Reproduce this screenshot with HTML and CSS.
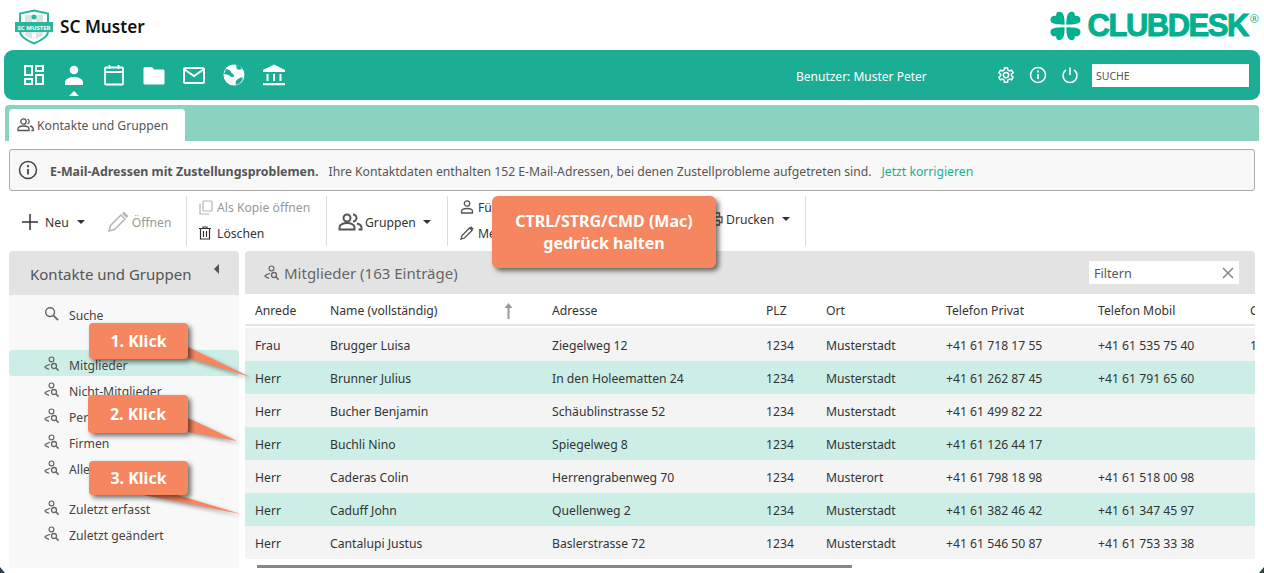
FILE: index.html
```html
<!doctype html>
<html lang="de">
  <head>
    <meta charset="UTF-8" />
    <title>SC Muster</title>
    <link rel="stylesheet" href="styles.css">
  </head>
  <body>
    <svg class="defs" width="0" height="0">
      <symbol id="i-find" viewBox="0 0 16 16">
        <circle cx="7.5" cy="3.4" r="2.4" fill="none" stroke="currentColor" stroke-width="1.2"/>
        <path d="M6 8.300 1.200 10.400v1.200L5 13.400" fill="none" stroke="currentColor" stroke-width="1.2"/>
        <circle cx="10" cy="10" r="2.500" fill="none" stroke="currentColor" stroke-width="1.3"/>
        <path d="m12 12 2.600 2.600" stroke="currentColor" stroke-width="1.5"/>
      </symbol>
      <symbol id="i-leaf" viewBox="0 0 17 15">
        <path d="M16 14.500C16 9 16 .5 10 .5 7.500.5 6.500 2.500 6.800 4.800 3.500 4.300.5 5.500.5 9.500.5 14 8 14.500 16 14.500z"/>
      </symbol>
    </svg>

    <div class="page">
      <header class="top">
        <div class="brand">
          <svg class="crest" width="40" height="36" viewBox="0 0 40 36">
            <path d="M20 1.500 34 4.500V23c0 5-7 8.500-14 11.500C13 31.500 6 28 6 23V4.500z" fill="#fff" stroke="#2bb69c" stroke-width="2"/>
            <path d="M11 6h7v24l-7-4zM22 6h7v20l-7 4z" fill="#d5e6e2"/>
            <path d="M20 5.500a1.500 1.500 0 0 1 0 5 1.500 1.500 0 0 1 0-5zM17.500 8a1.500 1.500 0 0 1 5 0 1.500 1.500 0 0 1-5 0z" fill="#2bb69c"/>
            <rect x="1" y="13" width="38" height="10" fill="#2bb69c"/>
            <text x="20" y="20.500" text-anchor="middle" class="crest-text">SC MUSTER</text>
          </svg>
          <span class="club-name">SC Muster</span>
        </div>
        <div class="cd-logo">
          <svg class="clover" width="31" height="30" viewBox="0 0 31 30" fill="#00b18f">
            <use href="#i-leaf" width="15.500" height="14.500"/>
            <use href="#i-leaf" width="15.500" height="14.500" transform="matrix(-1 0 0 1 31 0)"/>
            <use href="#i-leaf" width="15.500" height="14.500" transform="matrix(1 0 0 -1 0 30)"/>
            <use href="#i-leaf" width="15.500" height="14.500" transform="matrix(-1 0 0 -1 31 30)"/>
          </svg>
          <span class="cd-word">CLUBDESK</span><sup class="cd-reg">®</sup>
        </div>
      </header>

      <nav class="mainbar">
        <div class="mainbar-icons">
          <svg width="22" height="22" viewBox="0 0 22 22" fill="none" stroke="#fff" stroke-width="2"><rect x="2" y="2" width="7" height="9"/><rect x="13" y="2" width="7" height="5"/><rect x="2" y="15" width="7" height="5"/><rect x="13" y="11" width="7" height="9"/></svg>
          <span class="nav-active">
            <svg width="22" height="22" viewBox="0 0 22 22" fill="#fff"><circle cx="11" cy="6" r="4.300"/><path d="M2 21v-3c0-3 5-5 9-5s9 2 9 5v3z"/></svg>
          </span>
          <svg width="22" height="22" viewBox="0 0 22 22" fill="none" stroke="#fff" stroke-width="1.800"><rect x="2" y="3.500" width="18" height="17" rx="1"/><path d="M2 8h18M6.500 1v4M15.500 1v4"/></svg>
          <svg width="22" height="22" viewBox="0 0 22 22" fill="#fff"><path d="M2 3h7l2 2.500h9c1 0 1.500.5 1.500 1.500v12c0 1-.5 1.500-1.500 1.500H2C1 20.500.5 20 .5 19V4.500C.5 3.500 1 3 2 3z"/></svg>
          <svg width="22" height="22" viewBox="0 0 22 22" fill="none" stroke="#fff" stroke-width="2"><rect x="1" y="4" width="20" height="15" rx="1.500"/><path d="m1.500 5.500 9.500 6.500 9.500-6.500"/></svg>
          <svg width="22" height="22" viewBox="0 0 22 22"><circle cx="11" cy="11" r="10.500" fill="#fff"/><path d="M3 5c2 0 4 1 5 3s3 2 3 4-3 1-4 0-4-2-6-2zM13 21c-1-3 0-5 2-6s3-2 5-1c-1 3-3 6-7 7zM13 1c1 2 0 3 1 4s3 1 5 0c-1-2-3-4-6-4z" fill="#1bae94"/></svg>
          <svg width="22" height="22" viewBox="0 0 22 22" fill="#fff"><path d="M11 .5 22 6v2H0V6zM0 19h22v2.200H0z"/><path d="M3.500 10h2v7h-2zM10 10h2v7h-2zM16.500 10h2v7h-2z"/></svg>
        </div>
        <span class="user">Benutzer: Muster Peter</span>
        <div class="mainbar-tools">
          <svg width="18" height="18" viewBox="0 0 24 24" fill="none" stroke="#fff" stroke-width="2"><circle cx="12" cy="12" r="3.500"/><path d="m10 2.500-.6 3-2 1.100-2.900-1L2.500 9l2.300 2v2l-2.300 2 2 3.400 2.900-1 2 1.100.6 3h4l.6-3 2-1.100 2.900 1 2-3.400-2.300-2v-2l2.300-2-2-3.400-2.900 1-2-1.100-.6-3z"/></svg>
          <svg width="18" height="18" viewBox="0 0 18 18" fill="none" stroke="#fff" stroke-width="1.500"><circle cx="9" cy="9" r="7.500"/><path d="M9 8v5M9 4.500v2" stroke-width="1.800"/></svg>
          <svg width="18" height="18" viewBox="0 0 18 18" fill="none" stroke="#fff" stroke-width="1.500"><path d="M9 1.500v7.500M5 3.800a7 7 0 1 0 8 0"/></svg>
        </div>
        <div class="search">SUCHE</div>
      </nav>

      <div class="tabstrip">
        <div class="tab">
          <svg width="17" height="14" viewBox="0 0 17 14" fill="none" stroke="#555" stroke-width="1.300"><circle cx="6.500" cy="3.500" r="2.700"/><path d="M1 12.500v-1.500c0-2 3-3 5.500-3s5.500 1 5.500 3v1.500z"/><path d="M10.500 1a2.700 2.700 0 0 1 0 5M13 8c2 .5 3.300 1.500 3.300 3v1.500h-2"/></svg>
          Kontakte und Gruppen
        </div>
      </div>

      <div class="notice">
        <svg width="20" height="20" viewBox="0 0 20 20" fill="none" stroke="#444" stroke-width="1.500"><circle cx="10" cy="10" r="8.500"/><path d="M10 9v5.500M10 5v2.200" stroke-width="1.800"/></svg>
        <b>E-Mail-Adressen mit Zustellungsproblemen.</b>
        <span>Ihre Kontaktdaten enthalten 152 E-Mail-Adressen, bei denen Zustellprobleme aufgetreten sind.</span>
        <a href="#">Jetzt korrigieren</a>
      </div>

      <div class="toolbar">
        <div class="tool-group group-new">
          <div class="tool">
            <svg width="16" height="16" viewBox="0 0 16 16" stroke="#333" stroke-width="1.500"><path d="M8 0v16M0 8h16"/></svg>
            Neu <i class="caret"></i>
          </div>
          <div class="tool off">
            <svg width="22" height="22" viewBox="0 0 22 22" fill="none" stroke="#b5b5b5" stroke-width="1.500"><path d="m2 20 1.500-5.500L14 4l4 4L7.500 18.500z"/><path d="m16 1.500 4.500 4.500" stroke-width="2.500"/></svg>
            Öffnen
          </div>
        </div>
        <div class="tool-group stack group-copy">
          <div class="tool off">
            <svg width="14" height="15" viewBox="0 0 14 15" fill="none" stroke="#b5b5b5" stroke-width="1.200"><rect x="4" y="1" width="9" height="10" rx="1"/><path d="M1 3.500V14h9"/></svg>
            Als Kopie öffnen
          </div>
          <div class="tool">
            <svg width="12" height="14" viewBox="0 0 12 14" fill="none" stroke="#333" stroke-width="1.200"><path d="M0 2.500h12M4 2.500V1h4v1.500M1.500 2.500V13h9V2.500M4.500 5v6M7.500 5v6"/></svg>
            Löschen
          </div>
        </div>
        <div class="tool-group group-groups">
          <div class="tool">
            <svg width="25" height="18" viewBox="0 0 25 18" fill="none" stroke="#555" stroke-width="2"><circle cx="9" cy="5" r="3.500"/><path d="M1.500 16.500v-2c0-3 4-4.500 7.500-4.500s7.500 1.500 7.500 4.500v2z"/><path d="M15 1.500a3.500 3.500 0 0 1 0 7M19 10.500c2.500.7 4.500 2 4.500 4v2h-3"/></svg>
            Gruppen <i class="caret"></i>
          </div>
        </div>
        <div class="tool-group stack group-more">
          <div class="tool">
            <svg width="14" height="14" viewBox="0 0 14 14" fill="none" stroke="#555" stroke-width="1.300"><circle cx="7" cy="3.500" r="2.700"/><path d="M1.500 13v-1.500c0-2 3-3 5.500-3s5.500 1 5.500 3V13z"/></svg>
            Für Gruppe
          </div>
          <div class="tool">
            <svg width="14" height="14" viewBox="0 0 14 14" fill="none" stroke="#555" stroke-width="1.300"><path d="m1 13 1-3.500L9.500 2 12 4.500 4.500 12z"/><path d="m10.500 1 2.500 2.500" stroke-width="2"/></svg>
            Mehr
          </div>
        </div>
        <div class="tool-group group-print">
          <div class="tool">
            <svg width="14" height="14" viewBox="0 0 14 14" fill="none" stroke="#555" stroke-width="1.300"><path d="M3.500 5V1h7v4M3.500 10.500H1V5h12v5.500h-2.500M3.500 8.500h7V13h-7z"/></svg>
            Drucken <i class="caret"></i>
          </div>
        </div>
      </div>

      <div class="workspace">
        <aside class="side">
          <div class="side-head">
            <span>Kontakte und Gruppen</span>
            <i class="caret-left"></i>
          </div>
          <ul class="side-list">
            <li class="find">
              <svg width="15" height="15" viewBox="0 0 16 16" fill="none" stroke="#666" stroke-width="1.500"><circle cx="6.500" cy="6.500" r="4.700"/><path d="m10 10 5 5" stroke-width="1.800"/></svg>
              Suche
            </li>
            <li class="first selected"><svg width="16" height="16"><use href="#i-find"/></svg>Mitglieder</li>
            <li><svg width="16" height="16"><use href="#i-find"/></svg>Nicht-Mitglieder</li>
            <li><svg width="16" height="16"><use href="#i-find"/></svg>Personen</li>
            <li><svg width="16" height="16"><use href="#i-find"/></svg>Firmen</li>
            <li><svg width="16" height="16"><use href="#i-find"/></svg>Alle</li>
            <li class="recent"><svg width="16" height="16"><use href="#i-find"/></svg>Zuletzt erfasst</li>
            <li><svg width="16" height="16"><use href="#i-find"/></svg>Zuletzt geändert</li>
          </ul>
        </aside>

        <section class="main">
          <div class="main-head">
            <svg width="16" height="16"><use href="#i-find"/></svg>
            <span class="main-title">Mitglieder (163 Einträge)</span>
            <div class="filter">
              Filtern
              <svg width="12" height="12" viewBox="0 0 12 12" stroke="#888" stroke-width="1.500"><path d="m1 1 10 10M11 1 1 11"/></svg>
            </div>
          </div>
          <div class="grid-clip">
            <table class="grid">
              <colgroup>
                <col class="c-anrede"><col class="c-name"><col class="c-adr"><col class="c-plz"><col class="c-ort"><col class="c-tel"><col class="c-tel"><col class="c-last">
              </colgroup>
              <thead>
                <tr>
                  <th>Anrede</th>
                  <th class="sorted">Name (vollständig)<svg class="sort" width="9" height="16" viewBox="0 0 9 16" fill="#999"><path d="M4.500 0 8.500 5H5.500v11h-2V5H.5z"/></svg></th>
                  <th>Adresse</th><th>PLZ</th><th>Ort</th><th>Telefon Privat</th><th>Telefon Mobil</th><th>Geburtsdatum</th>
                </tr>
              </thead>
              <tbody>
                <tr><td>Frau</td><td>Brugger Luisa</td><td>Ziegelweg 12</td><td>1234</td><td>Musterstadt</td><td>+41 61 718 17 55</td><td>+41 61 535 75 40</td><td>12.03.1990</td></tr>
                <tr class="hit"><td>Herr</td><td>Brunner Julius</td><td>In den Holeematten 24</td><td>1234</td><td>Musterstadt</td><td>+41 61 262 87 45</td><td>+41 61 791 65 60</td><td></td></tr>
                <tr><td>Herr</td><td>Bucher Benjamin</td><td>Schäublinstrasse 52</td><td>1234</td><td>Musterstadt</td><td>+41 61 499 82 22</td><td></td><td></td></tr>
                <tr class="hit"><td>Herr</td><td>Buchli Nino</td><td>Spiegelweg 8</td><td>1234</td><td>Musterstadt</td><td>+41 61 126 44 17</td><td></td><td></td></tr>
                <tr><td>Herr</td><td>Caderas Colin</td><td>Herrengrabenweg 70</td><td>1234</td><td>Musterort</td><td>+41 61 798 18 98</td><td>+41 61 518 00 98</td><td></td></tr>
                <tr class="hit"><td>Herr</td><td>Caduff John</td><td>Quellenweg 2</td><td>1234</td><td>Musterstadt</td><td>+41 61 382 46 42</td><td>+41 61 347 45 97</td><td></td></tr>
                <tr><td>Herr</td><td>Cantalupi Justus</td><td>Baslerstrasse 72</td><td>1234</td><td>Musterstadt</td><td>+41 61 546 50 87</td><td>+41 61 753 33 38</td><td></td></tr>
              </tbody>
            </table>
          </div>
          <div class="scrollbar"></div>
        </section>
      </div>

      <!-- Anmerkungen ueber dem Screenshot -->
      <svg class="tails" width="1264" height="573" viewBox="0 0 1264 573">
        <path d="M188 347 250 377 188 358z"/>
        <path d="M188 418 237 441 188 432z"/>
        <path d="M143 495 241 514 177 495z"/>
      </svg>
      <div class="note note-ctrl">CTRL/STRG/CMD (Mac)<br>gedrück halten</div>
      <div class="note note-1">1. Klick</div>
      <div class="note note-2">2. Klick</div>
      <div class="note note-3">3. Klick</div>
    </div>
  </body>
</html>
```

FILE: styles.css
```css
body {
  margin: 0;
  background-color: #fff;
  color: #333;
  font-family: "Noto Sans", "Open Sans", sans-serif;
  font-size: 12.2px;
}
.defs {
  position: absolute;
}
.page {
  position: relative;
  width: 1264px;
  height: 573px;
  overflow: hidden;
}
/* dunkle Fensterecken unten */
.page::before,
.page::after {
  content: "";
  position: absolute;
  bottom: 0;
  border-bottom: 6px solid #2f3f48;
}
.page::before {
  left: 0;
  border-right: 5px solid transparent;
}
.page::after {
  right: 0;
  border-left: 5px solid transparent;
}

/* Kopf */
.top {
  height: 50px;
  display: flex;
  align-items: center;
  justify-content: space-between;
  padding: 3px 5px 0 14px;
  box-sizing: border-box;
}
.brand {
  display: flex;
  align-items: center;
  gap: 6px;
}
.crest-text {
  font-family: "Noto Sans", sans-serif;
  font-size: 6px;
  font-weight: 700;
  fill: #fff;
}
.club-name {
  font-size: 17.2px;
  font-weight: 600;
  color: #111;
}
.cd-logo {
  display: flex;
  align-items: center;
  margin-top: -1px;
  color: #00b18f;
}
.clover {
  margin-right: 7px;
}
.cd-word {
  font-family: "Liberation Sans", sans-serif;
  font-size: 31px;
  font-weight: 700;
  line-height: 30px;
  letter-spacing: -1.5px;
  -webkit-text-stroke: 1px #00b18f;
}
.cd-reg {
  font-size: 11px;
  line-height: 11px;
  margin: -15px 0 0 2px;
}

/* Hauptleiste */
.mainbar {
  height: 50px;
  margin: 0 4px;
  padding: 0 11px 0 20px;
  background-color: #1bae94;
  border-radius: 9px;
  display: flex;
  align-items: center;
  color: #fff;
}
.mainbar-icons {
  display: flex;
  gap: 18px;
  width: 773px;
  margin-left: -1px;
}
.nav-active {
  position: relative;
  display: block;
  height: 22px;
}
.nav-active::after {
  content: "";
  position: absolute;
  left: 6px;
  top: 27px;
  border-left: 5px solid transparent;
  border-right: 5px solid transparent;
  border-bottom: 5px solid #fff;
}
.user {
  width: 201px;
  padding-top: 2px;
  font-size: 12px;
}
.mainbar-tools {
  display: flex;
  gap: 14px;
  width: 95px;
}
.search {
  width: 153px;
  height: 23px;
  box-sizing: content-box;
  padding-left: 4px;
  background-color: #fff;
  color: #555;
  font-size: 10.5px;
  line-height: 25px;
}

/* Tabs */
.tabstrip {
  height: 36px;
  margin: 5px 5px 0;
  padding: 4px 0 0 4px;
  box-sizing: border-box;
  background-color: #8ad3c1;
  border-radius: 4px 4px 0 0;
}
.tab {
  width: 176px;
  height: 32px;
  box-sizing: border-box;
  padding-left: 8px;
  display: flex;
  align-items: center;
  gap: 3px;
  background-color: #fff;
  border-radius: 4px 4px 0 0;
  color: #555;
}

/* Hinweis */
.notice {
  height: 42px;
  box-sizing: border-box;
  margin: 8px 9px 0;
  padding-left: 8px;
  display: flex;
  align-items: center;
  border: 1px solid #aaa;
  border-radius: 3px;
  background-color: #f8f8f8;
  color: #555;
}
.notice b {
  margin-left: 12px;
  padding-top: 2px;
  font-size: 12.4px;
  font-weight: 700;
}
.notice span {
  margin-left: 10px;
  padding-top: 2px;
}
.notice a {
  margin-left: 10px;
  padding-top: 2px;
  color: #1bae94;
  text-decoration: none;
}

/* Werkzeugleiste */
.toolbar {
  height: 54px;
  margin-top: 3px;
  display: flex;
}
.tool-group {
  box-sizing: border-box;
  height: 50px;
  margin-top: 2px;
  display: flex;
  align-items: center;
  border-right: 1px solid #ddd;
}
.stack {
  flex-direction: column;
  align-items: flex-start;
  justify-content: center;
  gap: 7px;
  padding-bottom: 2px;
}
.tool {
  display: flex;
  align-items: center;
  gap: 7px;
  height: 19px;
  color: #333;
  white-space: nowrap;
}
.off {
  color: #999;
}
.caret {
  display: inline-block;
  margin-left: 1px;
  border-left: 4px solid transparent;
  border-right: 4px solid transparent;
  border-top: 4px solid #333;
}
.group-new {
  width: 187px;
  padding: 2px 0 0 22px;
  gap: 22px;
}
.group-new .off {
  gap: 3px;
}
.group-copy {
  width: 140px;
  padding-left: 12px;
}
.group-copy .off {
  gap: 4px;
}
.group-copy .tool:last-child {
  gap: 6px;
}
.group-groups {
  width: 121px;
  padding: 2px 0 0 11px;
}
.group-groups .tool {
  gap: 2px;
}
.group-groups .caret {
  margin-left: 5px;
}
.group-more {
  width: 163px;
  padding-left: 12px;
}
.group-more .tool {
  gap: 4px;
}
.group-print {
  width: 195px;
  padding: 0 0 4px 98px;
}
.group-print .tool {
  gap: 3px;
}
.group-print .caret {
  margin-left: 5px;
}

/* Arbeitsbereich */
.workspace {
  margin: 3px 9px 0;
  display: flex;
  gap: 6px;
  height: 317px;
}
.side {
  width: 230px;
  background-color: #f8f8f8;
  border-radius: 4px 4px 0 0;
}
.side-head {
  height: 44px;
  padding: 0 21px;
  display: flex;
  align-items: center;
  justify-content: space-between;
  background-color: #e3e3e3;
  border-radius: 4px 4px 0 0;
  color: #555;
  font-size: 15px;
}
.side-head span {
  padding-top: 1px;
}
.caret-left {
  margin: 0 -1px 8px 0;
  border-top: 5px solid transparent;
  border-bottom: 5px solid transparent;
  border-right: 5px solid #555;
}
.side-list {
  list-style: none;
  margin: 7px 0 0;
  padding: 0;
}
.side-list li {
  height: 26px;
  box-sizing: border-box;
  padding: 4px 0 0 35px;
  display: flex;
  align-items: center;
  gap: 9px;
  color: #444;
  border-radius: 4px;
}
.side-list svg {
  color: #666;
  flex: none;
  margin-top: -3px;
}
.side-list .find {
  padding-top: 0;
  gap: 10px;
}
.side-list .first {
  margin-top: 22px;
}
.side-list .recent {
  margin-top: 14px;
}
.selected {
  background-color: #cdeee7;
}

.main {
  flex: 1;
  min-width: 0;
  background-color: #fff;
}
.main-head {
  height: 43px;
  box-sizing: border-box;
  padding: 0 16px 0 19px;
  display: flex;
  align-items: center;
  background-color: #e3e3e3;
  border-radius: 4px 4px 0 0;
  color: #666;
}
.main-title {
  margin-left: 4px;
  flex: 1;
  font-size: 15px;
}
.filter {
  width: 150px;
  height: 23px;
  box-sizing: border-box;
  padding: 1px 5px 0;
  display: flex;
  align-items: center;
  justify-content: space-between;
  background-color: #fff;
  font-size: 12.6px;
  color: #555;
}

/* Tabelle */
.grid-clip {
  overflow: hidden;
}
.grid {
  width: 1240px;
  table-layout: fixed;
  border-collapse: separate;
  border-spacing: 0;
}
.c-anrede { width: 75px; }
.c-name { width: 222px; }
.c-adr { width: 214px; }
.c-plz { width: 60px; }
.c-ort { width: 120px; }
.c-tel { width: 152px; }
.c-last { width: 245px; }
.grid th {
  height: 28px;
  padding: 2px 0 0 10px;
  font-weight: 400;
  text-align: left;
  border-bottom: 2px solid #e3e3e3;
  white-space: nowrap;
}
.grid .sorted {
  position: relative;
}
.sort {
  position: absolute;
  left: 184px;
  top: 9px;
}
.grid td {
  height: 31px;
  padding: 2px 0 0 10px;
  background-color: #f4f4f4;
  white-space: nowrap;
}
.grid tbody tr:first-child td {
  border-top: 2px solid #fff;
}
.grid .hit td {
  background-color: #cdeee7;
}
.scrollbar {
  margin: 6px 0 0 12px;
  width: 595px;
  height: 3px;
  background-color: #888;
}

/* Anmerkungen */
.tails {
  position: absolute;
  left: 0;
  top: 0;
  fill: #f58660;
  filter: drop-shadow(2px 2px 2px rgba(0, 0, 0, 0.4));
}
.note {
  position: absolute;
  display: flex;
  align-items: center;
  justify-content: center;
  text-align: center;
  background-color: #f58660;
  border-radius: 4px;
  box-shadow: 3px 3px 5px rgba(0, 0, 0, 0.55);
  color: #fff;
  font-size: 16px;
  font-weight: 700;
}
.note-ctrl {
  left: 492px;
  top: 196px;
  width: 224px;
  height: 72px;
  font-size: 16px;
  line-height: 22px;
  border-radius: 6px;
}
.note-1 {
  left: 89px;
  top: 323px;
  width: 99px;
  height: 36px;
}
.note-2 {
  left: 88px;
  top: 395px;
  width: 100px;
  height: 38px;
}
.note-3 {
  left: 89px;
  top: 461px;
  width: 99px;
  height: 34px;
}
```
